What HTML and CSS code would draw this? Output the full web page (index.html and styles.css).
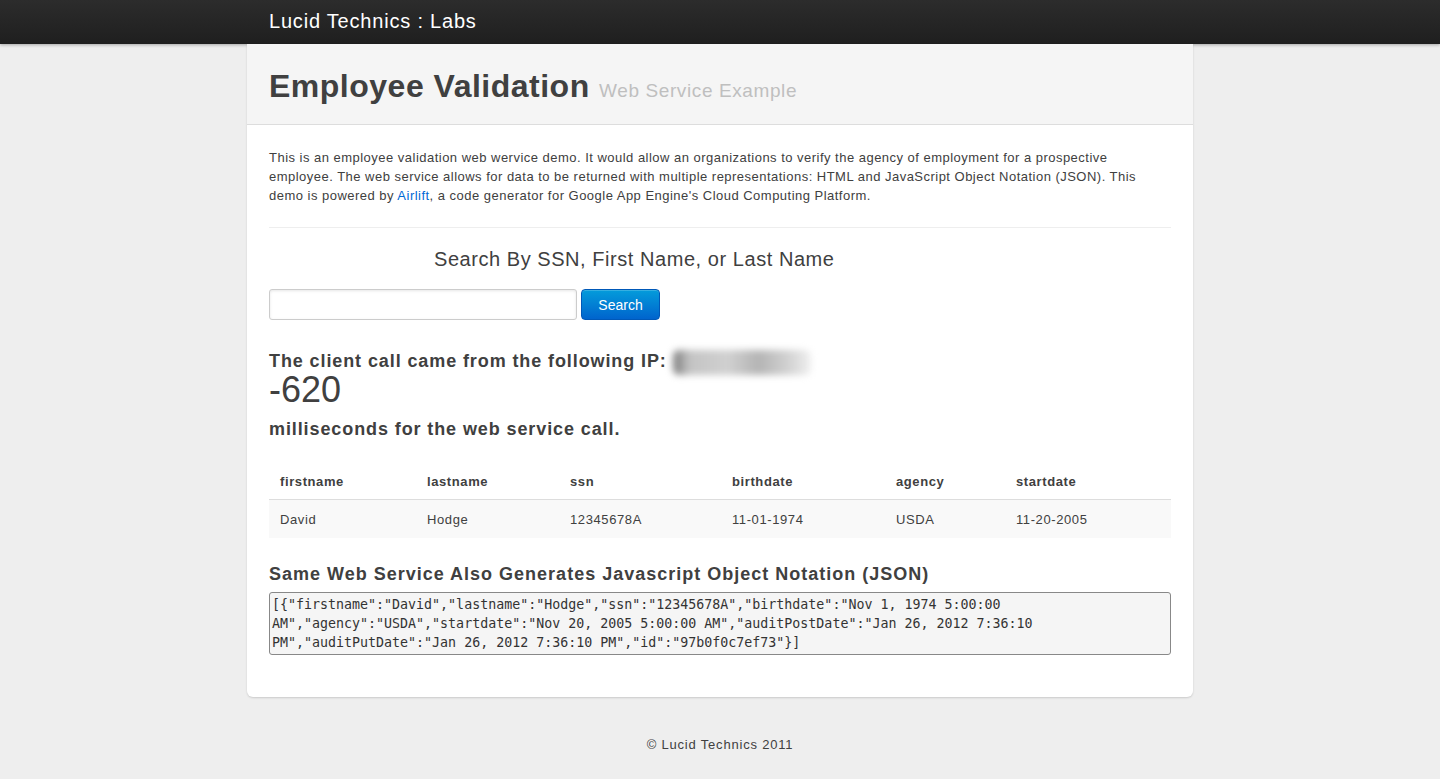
FILE: index.html
```html
<!DOCTYPE html>
<html>
<head>
<meta charset="utf-8">
<title>Employee Validation</title>
<link rel="stylesheet" href="styles.css">
</head>
<body>
<div class="topbar">
  <div class="topbar-inner">
    <a class="brand" href="#">Lucid Technics : Labs</a>
  </div>
</div>
<div class="container">
  <div class="content">
    <div class="page-header">
      <h1>Employee Validation <small>Web Service Example</small></h1>
    </div>
    <div class="body">
      <p class="intro">This is an employee validation web wervice demo. It would allow an organizations to verify the agency of employment for a prospective employee. The web service allows for data to be returned with multiple representations: HTML and JavaScript Object Notation (JSON). This demo is powered by <a href="#">Airlift</a>, a code generator for Google App Engine's Cloud Computing Platform.</p>
      <hr class="rule">
      <form class="search">
        <div class="legend">Search By SSN, First Name, or Last Name</div>
        <div class="search-row">
          <input class="search-input" type="text">
          <button class="btn" type="button">Search</button>
        </div>
      </form>
      <h3 class="ip-line">The client call came from the following IP: <span class="blur-ip"></span></h3>
      <div class="timing">-620</div>
      <h3 class="ms-line">milliseconds for the web service call.</h3>
      <table class="data">
        <thead>
          <tr><th class="c1">firstname</th><th class="c2">lastname</th><th class="c3">ssn</th><th class="c4">birthdate</th><th class="c5">agency</th><th>startdate</th></tr>
        </thead>
        <tbody>
          <tr><td>David</td><td>Hodge</td><td>12345678A</td><td>11-01-1974</td><td>USDA</td><td>11-20-2005</td></tr>
        </tbody>
      </table>
      <h3 class="json-title">Same Web Service Also Generates Javascript Object Notation (JSON)</h3>
      <pre class="json">[{"firstname":"David","lastname":"Hodge","ssn":"12345678A","birthdate":"Nov 1, 1974 5:00:00 AM","agency":"USDA","startdate":"Nov 20, 2005 5:00:00 AM","auditPostDate":"Jan 26, 2012 7:36:10 PM","auditPutDate":"Jan 26, 2012 7:36:10 PM","id":"97b0f0c7ef73"}]</pre>
    </div>
  </div>
  <footer class="footer">© Lucid Technics 2011</footer>
</div>
</body>
</html>
```

FILE: styles.css
```css
html, body {
  margin: 0;
  padding: 0;
}
body {
  background: #eeeeee;
  font-family: "Liberation Sans", Arial, Helvetica, sans-serif;
  font-size: 13px;
  line-height: 19px;
  color: #404040;
}
a {
  color: #0069d6;
  text-decoration: none;
}
.topbar {
  height: 44px;
  background: linear-gradient(to bottom, #2c2c2c, #1f1f1f);
  box-shadow: 0 1px 3px rgba(0, 0, 0, 0.3);
}
.topbar-inner {
  width: 902px;
  margin: 0 auto;
  display: flex;
  align-items: center;
  height: 41px;
}
.brand {
  color: #ffffff;
  font-size: 20px;
  line-height: 24px;
  letter-spacing: 0.8px;
}
.container {
  width: 946px;
  margin: 0 auto;
}
.content {
  background: #ffffff;
  border-radius: 0 0 6px 6px;
  box-shadow: 0 1px 2px rgba(0, 0, 0, 0.15);
  padding-bottom: 42px;
}
.page-header {
  background: #f5f5f5;
  border-bottom: 1px solid #dddddd;
  padding: 24px 22px 19px;
}
.page-header h1 {
  margin: 0;
  font-size: 32px;
  line-height: 37px;
  font-weight: bold;
  color: #404040;
  letter-spacing: 0.5px;
}
.page-header small {
  font-size: 19px;
  line-height: 1;
  font-weight: normal;
  color: #bfbfbf;
  letter-spacing: 0.6px;
}
.body {
  padding: 0 22px;
}
.intro {
  margin: 23px 0 0;
  letter-spacing: 0.48px;
}
.rule {
  border: 0;
  border-top: 1px solid #eeeeee;
  margin: 22px 0 0;
  height: 0;
}
.search {
  margin: 0;
}
.legend {
  padding: 18px 0 0 165px;
  font-size: 20px;
  line-height: 26px;
  color: #404040;
  letter-spacing: 0.55px;
}
.search-row {
  display: flex;
  gap: 4px;
  margin-top: 17px;
  align-items: center;
}
.search-input {
  box-sizing: border-box;
  width: 308px;
  height: 31px;
  border: 1px solid #cccccc;
  border-radius: 3px;
  box-shadow: inset 0 1px 3px rgba(0, 0, 0, 0.1);
  margin: 0;
  padding: 4px 6px;
  font-family: inherit;
  font-size: 13px;
}
.btn {
  box-sizing: border-box;
  width: 79px;
  height: 31px;
  border: 1px solid #0058b8;
  border-radius: 4px;
  background: linear-gradient(to bottom, #049cdb, #0064cd);
  color: #ffffff;
  font-family: inherit;
  font-size: 14px;
  padding: 0;
  box-shadow: inset 0 1px 0 rgba(255, 255, 255, 0.2);
}
.ip-line, .ms-line, .json-title {
  font-size: 18px;
  line-height: 24px;
  font-weight: bold;
  margin: 0;
  color: #404040;
  letter-spacing: 0.9px;
}
.ip-line {
  margin-top: 29px;
  display: flex;
  align-items: center;
  height: 24px;
}
.blur-ip {
  display: inline-block;
  width: 138px;
  height: 25px;
  margin-left: 6px;
  margin-top: 2px;
  background: linear-gradient(to right, #7a7a7a 0%, #c4c4c4 12%, #d0d0d0 40%, #b4b4b4 62%, #d4d4d4 85%, #f0f0f0 100%);
  filter: blur(3.5px);
  border-radius: 6px;
}
.timing {
  font-size: 36px;
  line-height: 34px;
  color: #404040;
}
.ms-line {
  margin-top: 10px;
}
.data {
  width: 100%;
  border-collapse: collapse;
  margin-top: 21px;
}
.data th, .data td {
  text-align: left;
  padding: 10px 11px 9px;
  font-size: 13px;
  line-height: 19px;
  letter-spacing: 0.6px;
}
.data th {
  font-weight: bold;
  padding-bottom: 8px;
  border-bottom: 1px solid #dddddd;
}
.data tbody tr {
  background: #f9f9f9;
}
.c1 { width: 125px; }
.c2 { width: 121px; }
.c3 { width: 140px; }
.c4 { width: 142px; }
.c5 { width: 98px; }
.json-title {
  margin-top: 24px;
  letter-spacing: 1px;
}
.json {
  margin: 6px 0 0;
  background: #f5f5f5;
  border: 1px solid #888888;
  border-radius: 3px;
  padding: 2px;
  font-family: "DejaVu Sans Mono", "Liberation Mono", monospace;
  font-size: 13.3px;
  line-height: 19px;
  color: #333333;
  white-space: pre-wrap;
  word-wrap: break-word;
}
.footer {
  text-align: center;
  padding: 38px 0 20px;
  font-size: 13px;
  color: #404040;
  letter-spacing: 0.8px;
}
```
